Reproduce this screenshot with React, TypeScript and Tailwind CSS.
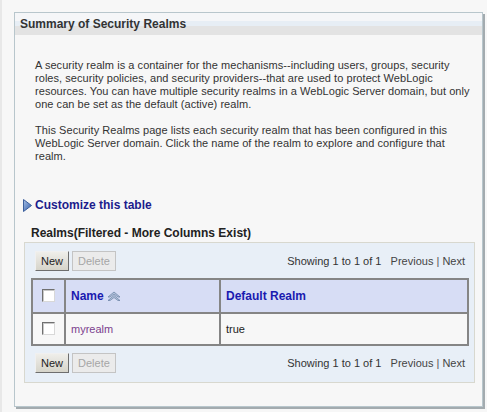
import React from "react";

const font = { fontFamily: "Tahoma, 'Liberation Sans', Arial, sans-serif" };

function ToolButton({ label, disabled }: { label: string; disabled?: boolean }) {
  return disabled ? (
    <button
      type="button"
      className="h-[20px] border border-[#c4c4c4] bg-[#ebebeb] px-[5px] text-[11px] leading-none text-[#a6a6a6]"
    >
      {label}
    </button>
  ) : (
    <button
      type="button"
      className="h-[20px] border border-t-[#f0f0f0] border-l-[#f0f0f0] border-b-[#6e6e6e] border-r-[#6e6e6e] bg-[linear-gradient(#efeeea,#d6d4ca)] px-[5px] text-[11px] leading-none text-[#222]"
    >
      {label}
    </button>
  );
}

function CheckBox() {
  return (
    <span className="inline-block h-[13px] w-[13px] border border-t-[#707070] border-l-[#707070] border-b-[#d8d8d8] border-r-[#d8d8d8] bg-white shadow-[inset_1px_1px_0_#c8c8c8]" />
  );
}

function TableToolbar() {
  return (
    <div className="flex items-center justify-between pl-[10px] pr-[9px]">
      <div className="flex gap-[3px]">
        <ToolButton label="New" />
        <ToolButton label="Delete" disabled />
      </div>
      <div className="text-[11px] text-[#333]">
        Showing 1 to 1 of 1&nbsp;&nbsp; <span className="text-[#444]">Previous</span>{" "}
        <span className="text-[#555]">|</span> <span className="text-[#444]">Next</span>
      </div>
    </div>
  );
}

export default function App() {
  return (
    <div
      className="relative h-[412px] w-[487px] overflow-hidden border-l-2 border-[#e8e8e8] bg-[#f7f7f7] pl-[12px] pt-[12px]"
      style={font}
    >
      <div className="h-[395px] w-[469px] border border-[#b8c6cc] bg-[#f7f7f7] shadow-[2px_2px_0_#a3abaf]">
        <div className="flex h-[22px] items-center bg-[linear-gradient(#f5f6f8_0,#f5f6f8_8px,#e7eef5_8px,#e7eef5_13px,#e3e3e3_13px)] pl-[5px] text-[12px] font-bold text-[#333]">
          Summary of Security Realms
        </div>

        <div className="pl-[20px] pt-[24px] text-[11px] leading-[13px] tracking-[0.05px] text-[#333]">
          <p className="whitespace-nowrap">
            A security realm is a container for the mechanisms--including users, groups, security
            <br />
            roles, security policies, and security providers--that are used to protect WebLogic
            <br />
            resources. You can have multiple security realms in a WebLogic Server domain, but only
            <br />
            one can be set as the default (active) realm.
          </p>
          <p className="mt-[13px] whitespace-nowrap">
            This Security Realms page lists each security realm that has been configured in this
            <br />
            WebLogic Server domain. Click the name of the realm to explore and configure that
            <br />
            realm.
          </p>
        </div>

        <div className="mt-[33px] flex items-center gap-[3px] pl-[8px] text-[12px] font-bold text-[#1c1c8c]">
          <svg width="9" height="13" viewBox="0 0 9 13">
            <defs>
              <linearGradient id="tri" x1="0" y1="0" x2="1" y2="1">
                <stop offset="0" stopColor="#a9c2e6" />
                <stop offset="1" stopColor="#2f5aa8" />
              </linearGradient>
            </defs>
            <path d="M0.5 0.5 L8.5 6.5 L0.5 12.5 Z" fill="url(#tri)" stroke="#3c5f9c" strokeWidth="1" />
          </svg>
          <span>Customize this table</span>
        </div>

        <div className="mt-[10px] pl-[16px] text-[12px] font-bold text-[#222]">
          Realms(Filtered - More Columns Exist)
        </div>

        <div className="ml-[9px] mt-0 h-[141px] w-[451px] border border-[#d8d8cf] bg-[#e8eff7] pt-[8px]">
          <TableToolbar />

          <table className="ml-[6px] mt-[7px] w-[438px] border-collapse border-2 border-[#858585] text-[11px]">
            <thead>
              <tr className="h-[34px] bg-[#d7ddf5]">
                <th className="w-[33px] border-2 border-[#858585] text-center">
                  <span className="relative top-[2px]">
                    <CheckBox />
                  </span>
                </th>
                <th className="w-[155px] border-2 border-[#858585] pl-[5px] text-left text-[12px] font-bold text-[#1a1ab0]">
                  <span className="inline-flex items-center gap-[3px]">
                    Name
                    <svg width="14" height="10" viewBox="0 0 14 10">
                      <path d="M1 6 L7 1 L13 6 L11 6 L7 3 L3 6 Z" fill="#b8c8de" stroke="#6f86a8" strokeWidth="0.8" />
                      <path d="M1 9.5 L7 4.5 L13 9.5 L11 9.5 L7 6.5 L3 9.5 Z" fill="#b8c8de" stroke="#6f86a8" strokeWidth="0.8" />
                    </svg>
                  </span>
                </th>
                <th className="border-2 border-[#858585] pl-[5px] text-left text-[12px] font-bold text-[#1a1ab0]">
                  Default Realm
                </th>
              </tr>
            </thead>
            <tbody>
              <tr className="h-[32px] bg-[#f7f7f7]">
                <td className="border-2 border-[#858585] text-center">
                  <span className="relative top-[2px]">
                    <CheckBox />
                  </span>
                </td>
                <td className="border-2 border-[#858585] pl-[5px] text-[#7b3f8e]">myrealm</td>
                <td className="border-2 border-[#858585] pl-[5px] text-[#222]">true</td>
              </tr>
            </tbody>
          </table>

          <div className="mt-[7px]">
            <TableToolbar />
          </div>
        </div>
      </div>
    </div>
  );
}
